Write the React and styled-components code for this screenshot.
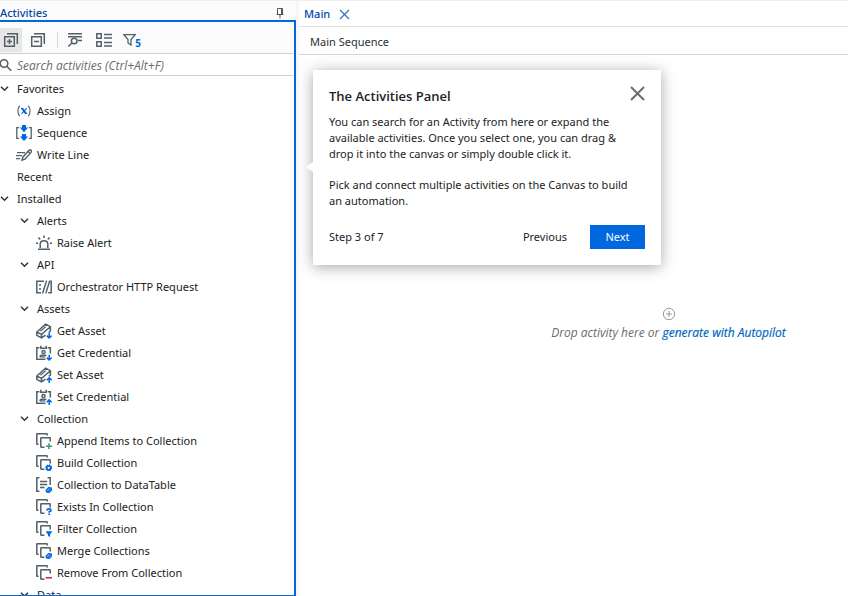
import React from "react";
import styled, { createGlobalStyle } from "styled-components";

const blue = "#0067df";
const slate = "#526069";

const GlobalStyle = createGlobalStyle`
  * { box-sizing: border-box; }
  body {
    margin: 0;
    font-family: "Noto Sans", "Open Sans", sans-serif;
    font-size: 11px;
    line-height: 16px;
    color: #222222;
    background: #ffffff;
  }
  button, input { font: inherit; color: inherit; }
  button { padding: 0; border: 0; background: none; cursor: pointer; }
  ul { list-style: none; margin: 0; padding: 0; }
`;

const Page = styled.div`
  display: grid;
  grid-template-columns: 296px 1fr;
  column-gap: 3px;
  height: 100vh;
  overflow: hidden;
  border-top: 1px solid #efefef;
  background: linear-gradient(to right, #ffffff 296px, #f6f6f6 296px, #f6f6f6 299px, #ffffff 299px);
`;

const Sidebar = styled.aside`
  display: flex;
  flex-direction: column;
  min-height: 0;
`;

const SidebarHeader = styled.header`
  display: flex;
  align-items: center;
  justify-content: space-between;
  height: 19px;
  padding-top: 4px;
  padding-right: 12px;
  background: #fcfcfc;
`;

const PanelTitle = styled.h2`
  margin: 0;
  font-size: 11px;
  font-weight: 500;
  color: #0048a8;
`;

const IconButton = styled.button`
  display: flex;
  align-items: center;
  justify-content: center;
`;

const Panel = styled.div`
  flex: 1;
  min-height: 0;
  display: flex;
  flex-direction: column;
  overflow: hidden;
  border: solid ${blue};
  border-width: 2px 2px 1px 0;
`;

const Toolbar = styled.div`
  display: flex;
  align-items: center;
  flex: none;
  height: 32px;
  margin-right: 1px;
  padding-top: 4px;
  border-bottom: 1px solid #cfcfcf;
  background: #fbfbfb;
`;

const ToolButton = styled(IconButton)`
  width: ${(p) => p.$width || 28}px;
  height: 24px;
  background: ${(p) => (p.$active ? "#e6e6e6" : "transparent")};
`;

const Divider = styled.span`
  width: 1px;
  height: 16px;
  margin: 0 4px 0 3px;
  background: #d8d8d8;
`;

const FilterCount = styled.span`
  align-self: flex-end;
  margin-left: -1px;
  font-size: 10px;
  line-height: 18px;
  font-weight: 700;
  color: ${blue};
`;

const SearchBox = styled.label`
  display: flex;
  align-items: center;
  flex: none;
  gap: 5px;
  height: 22px;
  margin-right: 1px;
  border-bottom: 1px solid #cfcfcf;
`;

const SearchInput = styled.input`
  flex: 1;
  min-width: 0;
  padding: 2px 0 0;
  border: 0;
  outline: 0;
  background: none;
  font-family: "Open Sans", sans-serif;
  font-size: 12px;
  font-style: italic;
  &::placeholder { color: #6b6b6b; opacity: 1; }
`;

const Tree = styled.ul`
  flex: 1;
  min-height: 0;
  overflow: hidden;
  && { padding-top: 2px; }
`;

const TreeRow = styled.button`
  display: flex;
  align-items: center;
  width: 100%;
  height: 22px;
  padding-left: ${(p) => p.$indent}px;
  gap: 5px;
  text-align: left;
  white-space: nowrap;
`;

const ChevronSlot = styled.span`
  display: flex;
  width: 12px;
`;

const Main = styled.main`
  display: flex;
  flex-direction: column;
  min-width: 0;
  background: #ffffff;
`;

const TabBar = styled.div`
  display: flex;
  align-items: center;
  gap: 9px;
  height: 26px;
  padding-left: 5px;
  padding-top: 1px;
  border-bottom: 1px solid #dde1e4;
`;

const Tab = styled.button`
  font-weight: 500;
  color: #0048b0;
`;

const Breadcrumb = styled.nav`
  height: 28px;
  padding: 7px 11px 0;
  color: #273139;
  border-bottom: 1px solid #cfd8dd;
`;

const Canvas = styled.section`
  flex: 1;
  position: relative;
  display: flex;
  flex-direction: column;
  align-items: center;
  gap: 4px;
  padding-top: 252px;
  padding-left: 190px;
`;

const DropHint = styled.p`
  margin: 0;
  font-family: "Open Sans", sans-serif;
  font-size: 12px;
  font-style: italic;
  white-space: nowrap;
  color: #6b6b6b;
`;

const HintLink = styled.a`
  color: #0067c0;
  text-decoration: none;
  -webkit-text-stroke: 0.2px;
`;

const Callout = styled.div`
  position: absolute;
  top: 15px;
  left: 14px;
  width: 348px;
  padding: 16px;
  background: #ffffff;
  box-shadow: 0 2px 14px rgba(0, 0, 0, 0.35);
  &::before {
    content: "";
    position: absolute;
    top: 92px;
    left: -7px;
    border: solid transparent;
    border-width: 5px 7px 5px 0;
    border-right-color: #ffffff;
  }
`;

const CalloutHeader = styled.div`
  display: flex;
  align-items: flex-start;
  justify-content: space-between;
  height: 28px;
`;

const CalloutTitle = styled.h3`
  margin: 0;
  font-family: "Open Sans", sans-serif;
  font-size: 13px;
  line-height: 20px;
  font-weight: 600;
`;

const CalloutText = styled.p`
  margin: 0 0 15px;
  white-space: nowrap;
`;

const CalloutFooter = styled.div`
  display: flex;
  align-items: center;
  height: 25px;
`;

const StepLabel = styled.span`
  flex: 1;
`;

const PreviousButton = styled.button`
  margin-right: 23px;
`;

const NextButton = styled.button`
  width: 55px;
  height: 24px;
  background: ${blue};
  color: #ffffff;
`;

const Svg = ({ size = 16, w, h, color = slate, sw = 1.6, children }) => (
  <svg
    width={w || size}
    height={h || size}
    viewBox={`0 0 ${w || size} ${h || size}`}
    fill="none"
    stroke={color}
    strokeWidth={sw}
    aria-hidden="true"
  >
    {children}
  </svg>
);

const Chevron = () => (
  <Svg w={9} h={8} color="#333333" sw={1.5}>
    <path d="M1 1.8 4.5 5.2 8 1.8" />
  </Svg>
);

const Pin = () => (
  <Svg w={8} h={12} color="#555555" sw={1}>
    <path d="M1.5 7V1.5H6.5V7M.5 7.5H7.5M4 8V11.5" />
    <path d="M5.5 1.5V7" />
  </Svg>
);

const Cross = ({ size, color, sw }) => (
  <Svg size={size} color={color} sw={sw}>
    <path d={`M1 1 ${size - 1} ${size - 1}M${size - 1} 1 1 ${size - 1}`} />
  </Svg>
);

const Boxes = ({ plus }) => (
  <Svg sw={1.5}>
    <path d="M1.7 4.7H11.3V14.3H1.7ZM4 1.7H14.3V12M4 9.5H9" />
    {plus && <path d="M6.5 7V12" />}
  </Svg>
);

const SearchLines = () => (
  <Svg sw={1.5}>
    <path d="M0 1.7H14M0 4.7H14M10 8.5H14M4.2 10.8.4 14.5" />
    <circle cx="6.2" cy="9" r="2.8" />
  </Svg>
);

const ListView = () => (
  <Svg sw={1.5}>
    <path d="M.8 1.7H5.2V6.2H.8ZM.8 9.7H5.2V14.2H.8ZM8 2.5H16M8 6H16M8 10.5H16M8 14H16" />
  </Svg>
);

const Funnel = () => (
  <Svg w={13} h={14} sw={1.3}>
    <path d="M.8 1.6H12.2L8 6.5V12L5 10V6.5Z" />
  </Svg>
);

const Magnifier = () => (
  <Svg w={12} h={14} sw={1.6}>
    <circle cx="4" cy="5.5" r="3.8" />
    <path d="M6.8 8.3 11.2 12.7" />
  </Svg>
);

const PlusCircle = () => (
  <Svg size={14} color="#999999" sw={1}>
    <circle cx="7" cy="7" r="5.7" />
    <path d="M7 4V10M4 7H10" />
  </Svg>
);

const Arrow = ({ up }) => (
  <path
    stroke={blue}
    d={up ? "M13.2 16V11M10.7 13.2 13.2 10.8 15.7 13.2" : "M13.2 9.8V15M10.7 12.6 13.2 15 15.7 12.6"}
  />
);

const Asset = ({ up }) => (
  <Svg sw={1.5}>
    <path d="M9.5 12.2 5.5 14.8.8 12.4V9L9.6 1.2 14.4 3.6V8L12.8 9.4M.8 9 5.5 11.3 14.4 3.8M5.5 11.3V14.6" />
    <path strokeWidth="1.2" d="M4.4 8.2 9.6 3.8" />
    <Arrow up={up} />
  </Svg>
);

const Credential = ({ up }) => (
  <Svg sw={1.5}>
    <path d="M9.5 14.2H.8V2.8H3.4M11.6 2.8H14.3V8.5M4.8 .8V3.3H10.2V.8" />
    <circle cx="7.5" cy="7" r="1.6" />
    <path strokeWidth="1.4" d="M4 12V11.6Q4 10.2 5.8 10.2H9.2Q10 10.2 10.4 10.6M4 11.9H9.4" />
    <Arrow up={up} />
  </Svg>
);

const Slash = () => (
  <path
    stroke={blue}
    strokeWidth="1.4"
    d="M10.2 14.6V13.2L12.6 10.8H14.2M15.6 11.4V12.8L13.2 15.2H11.6M10.4 15.4 15.6 10.4"
  />
);

const badges = {
  add: <path stroke="#38a169" strokeWidth="1.6" d="M13 10.2V16M10 13.2H16" />,
  gear: (
    <g stroke={blue}>
      <circle cx="12.7" cy="12.8" r="2" strokeWidth="1.8" />
      <circle cx="12.7" cy="12.8" r="2.9" strokeDasharray="1.3 .98" strokeWidth="1.1" />
    </g>
  ),
  question: (
    <path stroke={blue} strokeWidth="1.7" d="M11 11.6Q11 9.8 13 9.8T15 11.4Q15 12.3 13.2 12.8V13.8M13.2 14.5V16" />
  ),
  funnel: <path stroke="none" fill={blue} d="M10 10.2H16V11L14 13.4V16L12 15V13.4L10 11Z" />,
  merge: <Slash />,
  remove: <path stroke="#cc3d45" strokeWidth="1.7" d="M9.6 12.8H16" />,
};

const Collection = ({ badge }) => (
  <Svg sw={1.5}>
    <path d="M2.6 11.2H1.2Q.8 11.2.8 10.8V1.2Q.8.8 1.2.8H10.8Q11.2.8 11.2 1.2V2.6M8.4 14.2H5.2Q4.8 14.2 4.8 13.8V5.2Q4.8 4.8 5.2 4.8H13.8Q14.2 4.8 14.2 5.2V8.6" />
    {badges[badge]}
  </Svg>
);

const icons = {
  assign: (
    <Svg sw={1.1}>
      <path d="M3.6 2.6Q.2 8 3.6 13.2M12.4 2.6Q15.8 8 12.4 13.2" />
      <path stroke={blue} strokeWidth="2" d="M6.2 5.2 10 10.8" />
      <path stroke={blue} strokeWidth="1.3" d="M10.6 5.4 5.6 10.6M5 5.7H7M9.4 10.4H11.2" />
    </Svg>
  ),
  sequence: (
    <Svg sw={1.3}>
      <path d="M3 2.6H.8V13.4H3M13 2.6H15.2V13.4H13" />
      <path stroke="none" fill={blue} d="M6 0H10V2.5H12.2L8 7.2 3.8 2.5H6ZM6 9H10V11.5H12.2L8 16 3.8 11.5H6Z" />
    </Svg>
  ),
  write: (
    <Svg sw={1.4}>
      <path d="M6 13.2 6.8 10.2 13 3.2Q14 2.3 15 3.2T15 5.4L9 12.2ZM12 4.3 14 6.4M1 5.6H9M0 8.6H6M0 11.6H4" />
    </Svg>
  ),
  alert: (
    <Svg sw={1.5}>
      <path d="M4.2 13V9Q4.2 5.7 8 5.7T11.8 9V13M2 14.2H14M8 .4V3M2.4 2.6 4.2 4.6M13.6 2.6 11.8 4.6M0 8.2H2M14 8.2H16" />
    </Svg>
  ),
  http: (
    <Svg sw={1.5}>
      <path d="M8 2.2H.8V13.8H5M6.6 14.4 10.6 1.6M9.8 14.4 13.8 1.6M14.4 2.2H15.2V13.8H12.2M4 5V7M4 9V11" />
    </Svg>
  ),
  getAsset: <Asset />,
  setAsset: <Asset up />,
  getCredential: <Credential />,
  setCredential: <Credential up />,
  table: (
    <Svg sw={1.5}>
      <path d="M3.4.8H.8V14.2H3.4M11.6.8H14.2V8M4 4.5H11.2M4 7.5H11.2M4 10.5H8.5" />
      <Slash />
    </Svg>
  ),
};

const activities = [
  {
    label: "Favorites",
    items: [
      { label: "Assign", icon: icons.assign },
      { label: "Sequence", icon: icons.sequence },
      { label: "Write Line", icon: icons.write },
    ],
  },
  { label: "Recent" },
  {
    label: "Installed",
    items: [
      { label: "Alerts", items: [{ label: "Raise Alert", icon: icons.alert }] },
      { label: "API", items: [{ label: "Orchestrator HTTP Request", icon: icons.http }] },
      {
        label: "Assets",
        items: [
          { label: "Get Asset", icon: icons.getAsset },
          { label: "Get Credential", icon: icons.getCredential },
          { label: "Set Asset", icon: icons.setAsset },
          { label: "Set Credential", icon: icons.setCredential },
        ],
      },
      {
        label: "Collection",
        items: [
          { label: "Append Items to Collection", icon: <Collection badge="add" /> },
          { label: "Build Collection", icon: <Collection badge="gear" /> },
          { label: "Collection to DataTable", icon: icons.table },
          { label: "Exists In Collection", icon: <Collection badge="question" /> },
          { label: "Filter Collection", icon: <Collection badge="funnel" /> },
          { label: "Merge Collections", icon: <Collection badge="merge" /> },
          { label: "Remove From Collection", icon: <Collection badge="remove" /> },
        ],
      },
      { label: "Data", items: [] },
    ],
  },
];

const TreeNode = ({ node, level }) => (
  <li>
    <TreeRow type="button" $indent={node.icon ? level * 20 - 4 : level * 20}>
      {node.icon || <ChevronSlot>{node.items && <Chevron />}</ChevronSlot>}
      {node.label}
    </TreeRow>
    {node.items && node.items.length > 0 && (
      <ul>
        {node.items.map((child) => (
          <TreeNode key={child.label} node={child} level={level + 1} />
        ))}
      </ul>
    )}
  </li>
);

export default function App() {
  return (
    <>
      <GlobalStyle />
      <Page>
        <Sidebar>
          <SidebarHeader>
            <PanelTitle>Activities</PanelTitle>
            <IconButton type="button" aria-label="Pin panel"><Pin /></IconButton>
          </SidebarHeader>
          <Panel>
            <Toolbar>
              <ToolButton type="button" aria-label="Expand all" $width={22} $active><Boxes plus /></ToolButton>
              <ToolButton type="button" aria-label="Collapse all" $width={32}><Boxes /></ToolButton>
              <Divider />
              <ToolButton type="button" aria-label="Find in list"><SearchLines /></ToolButton>
              <ToolButton type="button" aria-label="View options"><ListView /></ToolButton>
              <ToolButton type="button" aria-label="Filter, 5 active">
                <Funnel />
                <FilterCount>5</FilterCount>
              </ToolButton>
            </Toolbar>
            <SearchBox>
              <Magnifier />
              <SearchInput type="search" aria-label="Search activities" placeholder="Search activities (Ctrl+Alt+F)" />
            </SearchBox>
            <Tree>
              {activities.map((node) => (
                <TreeNode key={node.label} node={node} level={0} />
              ))}
            </Tree>
          </Panel>
        </Sidebar>
        <Main>
          <TabBar>
            <Tab type="button">Main</Tab>
            <IconButton type="button" aria-label="Close Main"><Cross size={11} color="#2f6fc4" sw={1.2} /></IconButton>
          </TabBar>
          <Breadcrumb aria-label="Breadcrumb">Main Sequence</Breadcrumb>
          <Canvas>
            <PlusCircle />
            <DropHint>
              Drop activity here or <HintLink href="#autopilot">generate with Autopilot</HintLink>
            </DropHint>
            <Callout role="dialog" aria-labelledby="callout-title">
              <CalloutHeader>
                <CalloutTitle id="callout-title">The Activities Panel</CalloutTitle>
                <IconButton type="button" aria-label="Close"><Cross size={15} color="#6e6e6e" sw={2} /></IconButton>
              </CalloutHeader>
              <CalloutText>
                You can search for an Activity from here or expand the<br />
                available activities. Once you select one, you can drag &amp;<br />
                drop it into the canvas or simply double click it.
              </CalloutText>
              <CalloutText>
                Pick and connect multiple activities on the Canvas to build<br />
                an automation.
              </CalloutText>
              <CalloutFooter>
                <StepLabel>Step 3 of 7</StepLabel>
                <PreviousButton type="button">Previous</PreviousButton>
                <NextButton type="button">Next</NextButton>
              </CalloutFooter>
            </Callout>
          </Canvas>
        </Main>
      </Page>
    </>
  );
}
